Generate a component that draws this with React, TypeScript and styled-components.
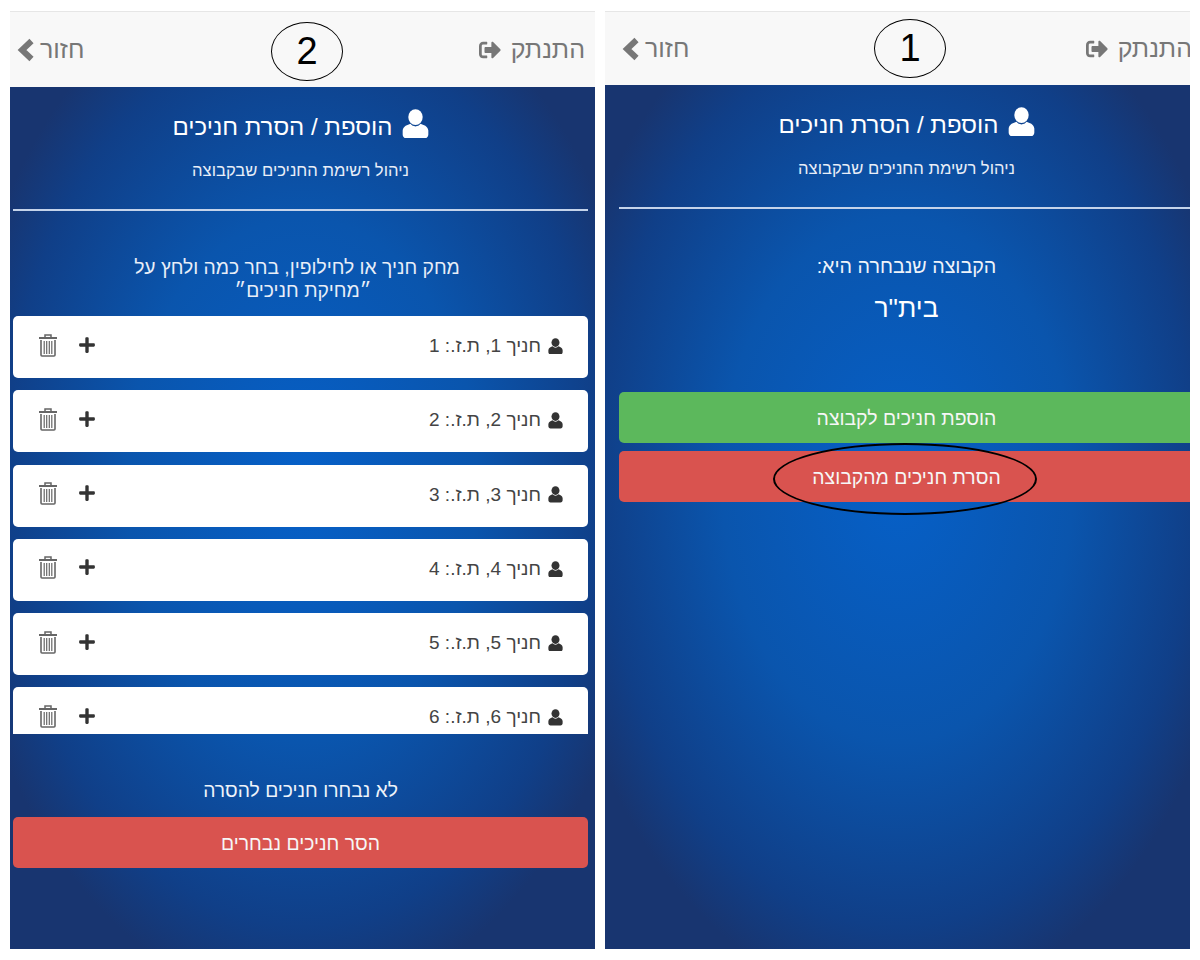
import styled, { createGlobalStyle } from 'styled-components';
import { FaPlus, FaSignOutAlt } from 'react-icons/fa';

const GlobalStyle = createGlobalStyle`
    html, body {
        margin: 0;
        padding: 0;
        background-color: #fff;
        font-family: "Liberation Sans", Arial, sans-serif;
    }
`;

const Page = styled.div`
    width: 1200px;
    height: 960px;
    box-sizing: border-box;
    padding: 11px 10px 0;

    display: flex;
    flex-direction: row;
    gap: 10px;
`;

const Phone = styled.div`
    width: 585px;
    height: 938px;

    display: flex;
    flex-direction: column;

    overflow: hidden;

    background: radial-gradient(ellipse 60% 56% at 50% 50%, #0660c8 0%, #0a55ad 50%, #103f88 85%, #183570 100%);
`;

const Nav = styled.div<{ $height: number; $right: number; $left: number; $bleed: number }>`
    position: relative;
    flex: none;
    box-sizing: border-box;
    height: ${({ $height }) => $height}px;
    margin-right: ${({ $bleed }) => -$bleed}px;
    padding: 0 ${({ $right }) => $right}px 0 ${({ $left }) => $left}px;

    display: flex;
    flex-direction: row;
    align-items: center;
    justify-content: space-between;

    border-top: 1px solid #e6e6e6;
    background-color: #f8f8f8;
`;

const NavLink = styled.div<{ $gap: number }>`
    display: flex;
    flex-direction: row;
    align-items: center;
    gap: ${({ $gap }) => $gap}px;

    font-size: 25px;
    color: #777;
`;

const StepCircle = styled.div<{ $left: number; $top: number }>`
    position: absolute;
    left: ${({ $left }) => $left}px;
    top: ${({ $top }) => $top}px;
    width: 72px;
    height: 59px;
    box-sizing: border-box;

    display: flex;
    align-items: center;
    justify-content: center;

    border: 1px solid #000;
    border-radius: 50%;

    font-size: 38px;
    color: #000;
`;

const Content = styled.div<{ $inset: number }>`
    flex: none;
    width: 575px;
    margin-left: ${({ $inset }) => $inset}px;

    display: flex;
    flex-direction: column;
    align-items: center;
`;

const Title = styled.div`
    height: 75px;
    padding-top: 4px;
    box-sizing: border-box;

    display: flex;
    flex-direction: row;
    align-items: center;
    justify-content: center;
    gap: 9px;

    font-size: 24px;
    color: #fff;
`;

const TitleIcon = styled.span`
    display: flex;
    margin-top: -6px;
`;

const Subtitle = styled.div`
    font-size: 16.6px;
    line-height: 18px;
    color: #e8eef8;
`;

const Divider = styled.hr`
    align-self: stretch;
    height: 2px;
    margin: 29px 0 0;
    border: 0;
    background-color: #c4d3ea;
`;

const Instructions = styled.div`
    width: 350px;
    margin-top: 45px;
    margin-left: -7px;
    text-align: center;

    font-size: 19.3px;
    line-height: 23px;
    color: #e8eef8;
`;

const InstructionsQuote = styled.span`
    display: block;
    padding-left: 12px;
`;

const GroupLabel = styled.div`
    margin-top: 47px;
    font-size: 19.7px;
    line-height: 21px;
    color: #eef3fa;
`;

const GroupName = styled.div`
    margin-top: 17px;
    font-size: 26.5px;
    line-height: 28px;
    color: #fff;
`;

const ChildList = styled.div`
    align-self: stretch;
    height: 418px;
    margin-top: 14px;
    overflow: hidden;
`;

const ChildCard = styled.div`
    height: 62px;
    margin-bottom: 12.3px;
    padding: 0 25px 0 25px;
    box-sizing: border-box;

    display: flex;
    flex-direction: row;
    align-items: center;
    justify-content: space-between;

    border-radius: 5px;
    background-color: #fff;
`;

const ChildName = styled.div`
    display: flex;
    flex-direction: row;
    align-items: center;
    gap: 7px;
    margin-top: -2px;

    font-size: 19px;
    color: #444;
`;

const CardActions = styled.div`
    display: flex;
    flex-direction: row;
    align-items: center;
    gap: 20px;
    margin-top: -5px;
    color: #333;
`;

const Notice = styled.div`
    margin-top: 46px;
    font-size: 19.3px;
    line-height: 21px;
    color: #eef3fa;
`;

const ActionButton = styled.div<{ $color: string; $top: number }>`
    position: relative;
    align-self: stretch;
    box-sizing: border-box;
    height: 51px;
    margin-top: ${({ $top }) => $top}px;
    padding-top: 2px;

    display: flex;
    align-items: center;
    justify-content: center;

    border-radius: 5px;
    background-color: ${({ $color }) => $color};

    font-size: 19.4px;
    color: #f6f6f6;
`;

const Ellipse = styled.div`
    position: absolute;
    left: 154px;
    top: -8px;
    width: 260px;
    height: 68px;
    border: 2px solid #000;
    border-radius: 50%;
`;

const ChevronIcon = () => (
    <svg width="19" height="24" viewBox="0 0 19 24" fill="none" stroke="#777" strokeWidth="6">
        <path d="M15.5 3 L6 12 L15.5 21" />
    </svg>
);

const UserIcon = ({ size, color }: { size: number; color: string }) => (
    <svg width={size} height={size * 1.1} viewBox="0 0 24 26" fill={color}>
        <ellipse cx="12" cy="7" rx="6.4" ry="7" />
        <path d="M7.5 13 C5 14 1 15 0.6 19 L0.6 22.5 C0.6 24.5 2 26 4 26 L20 26 C22 26 23.4 24.5 23.4 22.5 L23.4 19 C23 15 19 14 16.5 13 C14.5 16 9.5 16 7.5 13 Z" />
    </svg>
);

const TrashIcon = () => (
    <svg width="20" height="24" viewBox="0 0 20 24" fill="none" stroke="#666">
        <path d="M1 5 H19" strokeWidth="2" />
        <path d="M7 4.5 V2 H13 V4.5" strokeWidth="1.5" />
        <path d="M3 7 V22 Q3 23 4 23 H16 Q17 23 17 22 V7" strokeWidth="1.6" />
        <path d="M6.2 8 V21 M8.7 8 V21 M11.3 8 V21 M13.8 8 V21" strokeWidth="1.2" />
    </svg>
);

const children = [1, 2, 3, 4, 5, 6];

const NavBar = ({ step, height, left, right, bleed, circleLeft, circleTop }: {
    step: number; height: number; left: number; right: number; bleed: number; circleLeft: number; circleTop: number;
}) => (
    <Nav $height={height} $left={left} $right={right} $bleed={bleed}>
        <NavLink $gap={5}>
            <ChevronIcon />
            <span dir="rtl">חזור</span>
        </NavLink>
        <StepCircle $left={circleLeft} $top={circleTop}>{step}</StepCircle>
        <NavLink $gap={10}>
            <FaSignOutAlt size={22} />
            <span dir="rtl">התנתק</span>
        </NavLink>
    </Nav>
);

const PageHeader = () => (
    <>
        <Title dir="rtl">
            <TitleIcon><UserIcon size={27} color="#fff" /></TitleIcon>
            הוספת / הסרת חניכים
        </Title>
        <Subtitle dir="rtl">ניהול רשימת החניכים שבקבוצה</Subtitle>
        <Divider />
    </>
);

export default function App() {
    return (
        <Page>
            <GlobalStyle />

            <Phone>
                <NavBar step={2} height={76} left={6} right={10} bleed={0} circleLeft={261} circleTop={10} />
                <Content $inset={3}>
                    <PageHeader />
                    <Instructions dir="rtl">
                        מחק חניך או לחילופין, בחר כמה ולחץ על
                        <InstructionsQuote>״מחיקת חניכים״</InstructionsQuote>
                    </Instructions>
                    <ChildList>
                        {children.map((n) => (
                            <ChildCard key={n} dir="rtl">
                                <ChildName>
                                    <UserIcon size={15} color="#333" />
                                    <span>חניך {n}, ת.ז.: {n}</span>
                                </ChildName>
                                <CardActions>
                                    <FaPlus size={18} />
                                    <TrashIcon />
                                </CardActions>
                            </ChildCard>
                        ))}
                    </ChildList>
                    <Notice dir="rtl">לא נבחרו חניכים להסרה</Notice>
                    <ActionButton $color="#d9534f" $top={16} dir="rtl">הסר חניכים נבחרים</ActionButton>
                </Content>
            </Phone>

            <Phone>
                <NavBar step={1} height={74} left={16} right={0} bleed={2} circleLeft={269} circleTop={7} />
                <Content $inset={14}>
                    <PageHeader />
                    <GroupLabel dir="rtl">הקבוצה שנבחרה היא:</GroupLabel>
                    <GroupName dir="rtl">בית"ר</GroupName>
                    <ActionButton $color="#5cb85c" $top={70} dir="rtl">הוספת חניכים לקבוצה</ActionButton>
                    <ActionButton $color="#d9534f" $top={8} dir="rtl">
                        הסרת חניכים מהקבוצה
                        <Ellipse />
                    </ActionButton>
                </Content>
            </Phone>
        </Page>
    );
}
